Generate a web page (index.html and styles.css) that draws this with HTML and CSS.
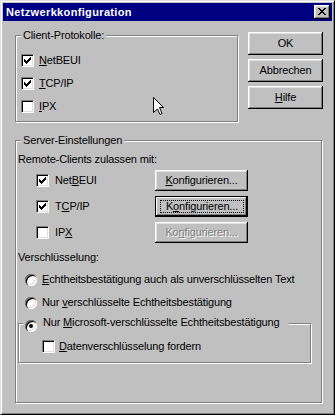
FILE: index.html
```html
<!DOCTYPE html>
<html lang="de">
<head>
    <meta charset="UTF-8">
    <title>Netzwerkkonfiguration</title>
    <link rel="stylesheet" href="styles.css">
</head>
<body>
    <div class="window">
        <div class="titlebar">
            <span class="title">Netzwerkkonfiguration</span>
            <span class="close-btn">
                <svg width="8" height="7" viewBox="0 0 8 7" shape-rendering="crispEdges">
                    <path d="M0 0h2v1H0z M6 0h2v1H6z M1 1h2v1H1z M5 1h2v1H5z M2 2h4v1H2z M3 3h2v1H3z M2 4h4v1H2z M1 5h2v1H1z M5 5h2v1H5z M0 6h2v1H0z M6 6h2v1H6z" fill="#000"/>
                </svg>
            </span>
        </div>

        <div class="content">
            <div class="top-row">
                <!-- Client-Protokolle -->
                <fieldset class="group client-group">
                    <legend>Client-Protokolle:</legend>
                    <label class="check-row">
                        <span class="checkbox checked"></span>
                        <span><u>N</u>etBEUI</span>
                    </label>
                    <label class="check-row">
                        <span class="checkbox checked"></span>
                        <span><u>T</u>CP/IP</span>
                    </label>
                    <label class="check-row">
                        <span class="checkbox"></span>
                        <span><u>I</u>PX</span>
                    </label>
                </fieldset>

                <div class="side-buttons">
                    <button class="btn">OK</button>
                    <button class="btn">Abbrechen</button>
                    <button class="btn"><u>H</u>ilfe</button>
                </div>
            </div>

            <!-- Server-Einstellungen -->
            <fieldset class="group server-group">
                <legend>Server-Einstellungen</legend>
                <div class="caption">Remote-Clients zulassen mit:</div>

                <div class="proto-row">
                    <label class="proto-check">
                        <span class="checkbox checked"></span>
                        <span>Net<u>B</u>EUI</span>
                    </label>
                    <button class="btn btn-small"><u>K</u>onfigurieren...</button>
                </div>
                <div class="proto-row">
                    <label class="proto-check">
                        <span class="checkbox checked"></span>
                        <span>T<u>C</u>P/IP</span>
                    </label>
                    <button class="btn btn-small btn-default"><span class="focus">K<u>o</u>nfigurieren...</span></button>
                </div>
                <div class="proto-row">
                    <label class="proto-check">
                        <span class="checkbox"></span>
                        <span>IP<u>X</u></span>
                    </label>
                    <button class="btn btn-small" disabled>Ko<u>n</u>figurieren...</button>
                </div>

                <div class="caption enc-caption">Verschlüsselung:</div>
                <label class="radio-row">
                    <span class="radio"></span>
                    <span><u>E</u>chtheitsbestätigung auch als unverschlüsselten Text</span>
                </label>
                <label class="radio-row">
                    <span class="radio"></span>
                    <span>Nur <u>v</u>erschlüsselte Echtheitsbestätigung</span>
                </label>

                <fieldset class="group sub-group">
                    <legend class="radio-legend">
                        <span class="radio selected"></span>
                        <span>Nur <u>M</u>icrosoft-verschlüsselte Echtheitsbestätigung</span>
                    </legend>
                    <label class="check-row data-row">
                        <span class="checkbox"></span>
                        <span><u>D</u>atenverschlüsselung fordern</span>
                    </label>
                </fieldset>
            </fieldset>
        </div>

        <!-- mouse pointer -->
        <svg class="cursor" width="12" height="20" viewBox="0 0 12 20">
            <polygon points="0.5,0.5 10.5,10.5 6.5,10.5 9,16.5 7,17.5 4.5,12 0.5,15.5" fill="#fff" stroke="#000" stroke-width="1"/>
        </svg>
    </div>
</body>
</html>
```

FILE: styles.css
```css
* {
    box-sizing: border-box;
}

body {
    margin: 0;
    background-color: #c0c0c0;
    font-family: "Liberation Sans", Arial, sans-serif;
    font-size: 11px;
    color: #000;
}

.window {
    position: relative;
    width: 335px;
    height: 415px;
    padding: 2px;
    background-color: #c0c0c0;
    border: 1px solid;
    border-color: #dfdfdf #000 #000 #dfdfdf;
    box-shadow: inset 1px 1px #fff, inset -1px -1px #808080;
    line-height: 13px;
    letter-spacing: -0.15px;
}

/* Title bar */
.titlebar {
    height: 18px;
    padding: 0 2px 0 3px;
    background-color: #000080;
    color: #fff;
    display: flex;
    align-items: center;
    justify-content: space-between;
}

.title {
    font-weight: bold;
    letter-spacing: 0.35px;
}

.close-btn {
    width: 16px;
    height: 14px;
    padding-bottom: 1px;
    background-color: #c0c0c0;
    display: flex;
    align-items: center;
    justify-content: center;
    box-shadow: inset -1px -1px #000, inset 1px 1px #fff, inset -2px -2px #808080, inset 2px 2px #dfdfdf;
}

.content {
    padding: 8px 9px 0 12px;
}

.top-row {
    display: flex;
    gap: 10px;
}

/* Group boxes */
.group {
    margin: 0;
    min-width: 0;
    border: 1px solid #808080;
    box-shadow: inset 1px 1px #fff, 1px 1px #fff;
}

.group legend {
    padding: 0 2px;
    line-height: 13px;
    background-color: #c0c0c0;
}

.client-group {
    width: 223px;
    padding: 7px 0 3px 5px;
}

.server-group {
    width: 307px;
    margin-top: 12px;
    padding: 6px 2px 39px 2px;
}

.server-group > legend {
    margin-left: 3px;
}

.sub-group {
    width: 293px;
    padding: 3px 0 4px 0;
}

.sub-group .radio-legend {
    margin-left: 4px;
    padding: 2px 9px 0 2px;
}

/* Checkboxes */
.check-row {
    height: 23px;
    display: flex;
    align-items: center;
    gap: 5px;
}

.data-row {
    margin-left: 23px;
    gap: 4px;
}

.checkbox {
    flex: none;
    width: 13px;
    height: 13px;
    padding: 2px;
    background-color: #fff;
    border: 1px solid;
    border-color: #808080 #fff #fff #808080;
    box-shadow: inset 1px 1px #000, inset -1px -1px #dfdfdf;
}

.checkbox.checked {
    background-image: url("data:image/svg+xml;utf8,<svg xmlns='http://www.w3.org/2000/svg' width='7' height='7' shape-rendering='crispEdges'><path d='M0 2h1v3H0z M1 3h1v3H1z M2 4h1v3H2z M3 3h1v3H3z M4 2h1v3H4z M5 1h1v3H5z M6 0h1v3H6z'/></svg>");
    background-repeat: no-repeat;
    background-position: 2px 2px;
}

/* Radios */
.radio {
    display: inline-flex;
    align-items: center;
    justify-content: center;
    flex: none;
    width: 12px;
    height: 12px;
    border-radius: 50%;
    background-color: #fff;
    box-shadow: inset 1px 1px #808080, inset 2px 2px #000, inset -1px -1px #fff, inset -2px -2px #dfdfdf;
    vertical-align: -2px;
}

.radio.selected::after {
    content: "";
    width: 4px;
    height: 4px;
    border-radius: 50%;
    background-color: #000;
}

.radio-row {
    height: 23px;
    padding-left: 7px;
    display: flex;
    align-items: center;
    gap: 5px;
}

.radio-legend .radio {
    margin-right: 3px;
}

.enc-caption {
    margin-top: 8px;
    margin-bottom: 4px;
}

/* Protocol rows */
.proto-row {
    height: 21px;
    margin-top: 5px;
    padding-left: 18px;
    display: flex;
    align-items: center;
}

.caption + .proto-row {
    margin-top: 4px;
}

.proto-check {
    width: 119px;
    display: flex;
    align-items: center;
    gap: 6px;
}

/* Buttons */
.side-buttons {
    width: 75px;
    padding-top: 3px;
    display: flex;
    flex-direction: column;
    gap: 4px;
}

.btn {
    height: 23px;
    padding: 0;
    border: none;
    background-color: #c0c0c0;
    color: #000;
    font: inherit;
    letter-spacing: inherit;
    box-shadow: inset -1px -1px #000, inset 1px 1px #fff, inset -2px -2px #808080, inset 2px 2px #dfdfdf;
}

.btn-small {
    width: 93px;
    height: 21px;
}

.btn-default {
    display: flex;
    padding: 3px 3px 3px 4px;
    border: 1px solid #000;
    box-shadow: inset -1px -1px #000, inset 1px 1px #fff, inset -2px -2px #808080;
}

.btn-default .focus {
    flex: 1;
    display: flex;
    align-items: center;
    justify-content: center;
    border: 1px dotted #000;
}

.btn:disabled {
    color: #808080;
    text-shadow: 1px 1px 0 #fff;
}

.cursor {
    position: absolute;
    left: 152px;
    top: 96px;
}
```
